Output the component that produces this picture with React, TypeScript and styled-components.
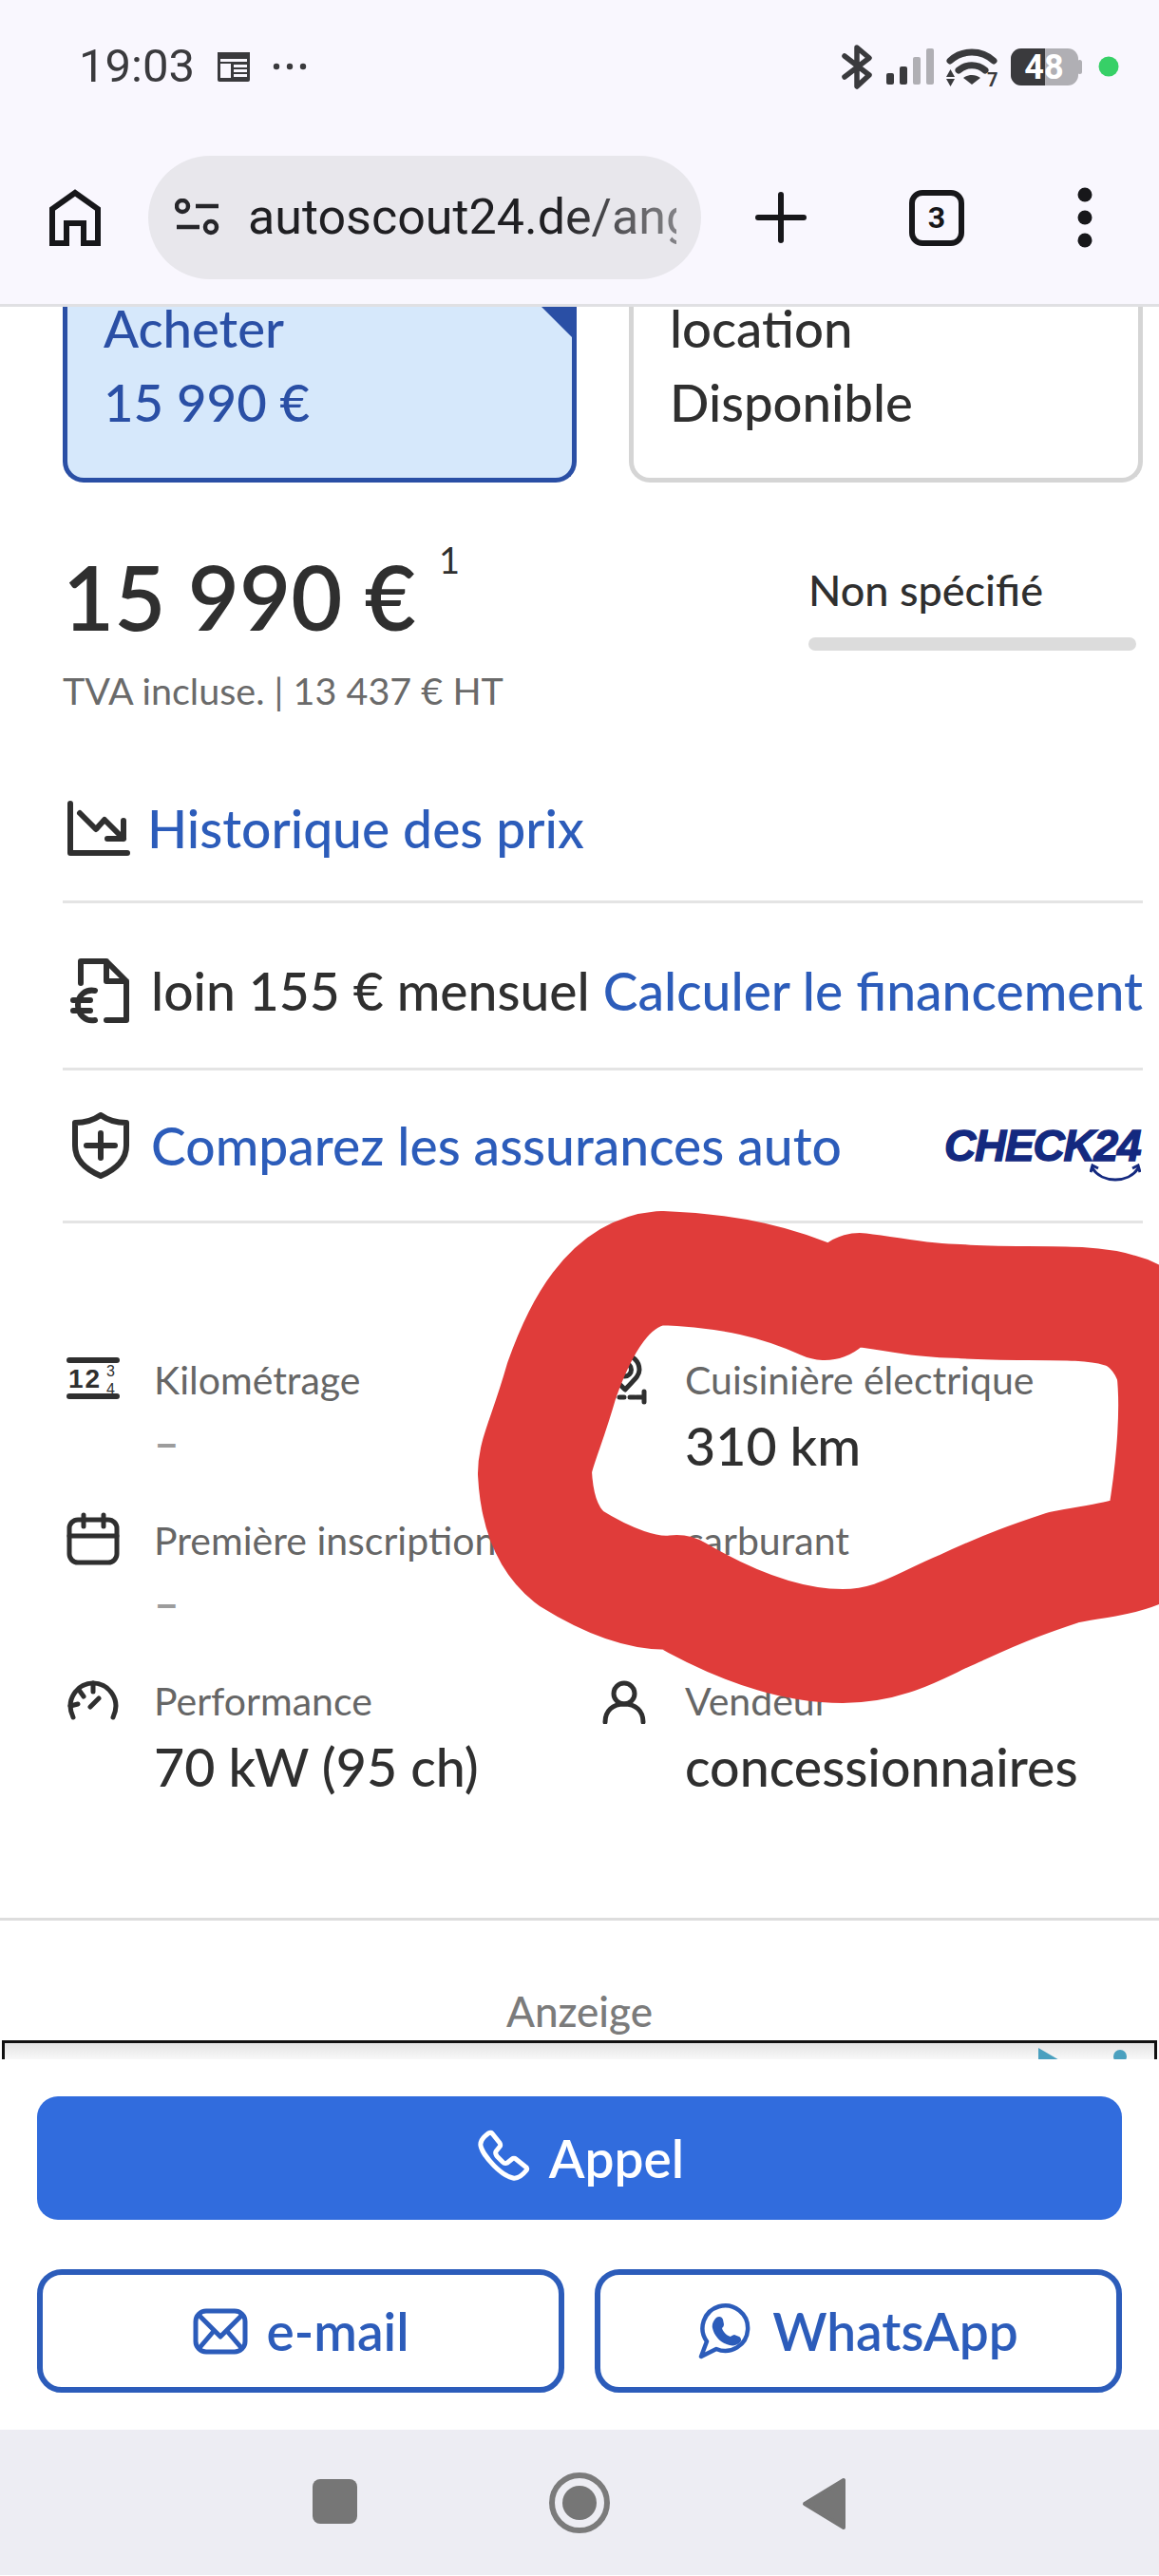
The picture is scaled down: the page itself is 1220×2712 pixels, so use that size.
import React from "react";
import styled, { createGlobalStyle } from "styled-components";

const Global = createGlobalStyle`
  html, body { margin: 0; padding: 0; background: #fff; }
  * { box-sizing: border-box; }
`;

const BODY_FONT = `"Lato", "Noto Sans", sans-serif`;
const UI_FONT = `"Roboto", "Noto Sans", sans-serif`;
const BLUE = "#2c5cba";
const INK = "#2f2f2f";

const Screen = styled.div`
  position: relative;
  width: 1220px;
  height: 2712px;
  overflow: hidden;
  display: flex;
  flex-direction: column;
  font-family: ${BODY_FONT};
  font-weight: 500;
  background: #fff;
`;

const BrowserChrome = styled.header`
  height: 323px;
  flex: none;
  background: #f9f7fe;
  border-bottom: 3px solid #e0e0e3;
  display: flex;
  flex-direction: column;
`;

const StatusBar = styled.div`
  height: 164px;
  padding: 46px 40px 0 83px;
  display: flex;
  align-items: flex-start;
  justify-content: space-between;
`;

const StatusLeft = styled.div`
  display: flex;
  align-items: center;
  height: 48px;
  gap: 23px;
`;

const Clock = styled.span`
  font: 400 49px/48px ${UI_FONT};
  color: #3a3a3d;
`;

const StatusRight = styled.div`
  display: flex;
  align-items: center;
  height: 48px;
`;

const Toolbar = styled.div`
  height: 130px;
  display: flex;
  align-items: center;
  padding-left: 52px;
`;

const HomeSlot = styled.div`
  width: 104px;
  flex: none;
  display: flex;
`;

const UrlPill = styled.div`
  width: 582px;
  height: 130px;
  flex: none;
  border-radius: 65px;
  background: #e8e7ec;
  display: flex;
  align-items: center;
  padding: 0 26px 0 28px;
  gap: 29px;
`;

const UrlText = styled.span`
  flex: 1;
  overflow: hidden;
  white-space: nowrap;
  font: 400 52px/70px ${UI_FONT};
  color: #1f1f22;
  -webkit-mask-image: linear-gradient(to right, #000 72%, rgba(0, 0, 0, 0.5) 100%);
  mask-image: linear-gradient(to right, #000 72%, rgba(0, 0, 0, 0.5) 100%);
`;

const ToolActions = styled.div`
  display: flex;
  align-items: center;
  margin-left: 57px;
`;

const TabCount = styled.div`
  width: 58px;
  height: 59px;
  margin-left: 108px;
  margin-right: 119px;
  border: 6px solid #17171a;
  border-radius: 14px;
  display: flex;
  align-items: center;
  justify-content: center;
  font: 700 32px/1 ${UI_FONT};
  color: #17171a;
`;

const Content = styled.main`
  flex: 1;
  padding-left: 66px;
  padding-right: 17px;
  display: flex;
  flex-direction: column;
`;

const OfferRow = styled.div`
  height: 185px;
  flex: none;
  display: flex;
  gap: 55px;
`;

const OfferCard = styled.div<{ $active?: boolean }>`
  position: relative;
  width: 541px;
  padding: 0 0 0 38px;
  border: 5px solid ${(p) => (p.$active ? "#2a4fa5" : "#d5d5d5")};
  border-top: none;
  border-radius: 0 0 22px 22px;
  background: ${(p) => (p.$active ? "#d6e8fb" : "#fff")};
  color: ${(p) => (p.$active ? "#2a4fa5" : INK)};
  font-size: 54.5px;
  line-height: 78px;
`;

const OfferLine = styled.div`
  height: 78px;
  margin-top: -17px;
  & + & { margin-top: 0; }
`;

const CornerMark = styled.span`
  position: absolute;
  top: 0;
  right: 0;
  border-style: solid;
  border-width: 0 32px 32px 0;
  border-color: transparent #2a4fa5 transparent transparent;
`;

const PriceBlock = styled.section`
  height: 287px;
  flex: none;
  display: flex;
  justify-content: space-between;
  padding-top: 67px;
`;

const PriceColumn = styled.div`
  display: flex;
  flex-direction: column;
`;

const PriceMain = styled.div`
  font-size: 93.5px;
  line-height: 106px;
  font-weight: 600;
  color: ${INK};
  display: flex;
  align-items: flex-start;
`;

const PriceNote = styled.sup`
  font-size: 38px;
  line-height: 38px;
  font-weight: 400;
  margin: -5px 0 0 24px;
`;

const PriceTax = styled.div`
  margin-top: 21px;
  font-size: 39.5px;
  line-height: 50px;
  font-weight: 400;
  color: #6a6a6a;
`;

const RatingColumn = styled.div`
  width: 345px;
  margin: 19px 7px 0 0;
`;

const RatingLabel = styled.div`
  font-size: 45px;
  line-height: 54px;
  color: ${INK};
`;

const RatingBar = styled.div`
  height: 14px;
  margin-top: 23px;
  border-radius: 7px;
  background: #dcdcdc;
`;

const LinkRow = styled.div<{ $height: number; $shift?: number }>`
  height: ${(p) => p.$height}px;
  flex: none;
  display: flex;
  align-items: center;
  justify-content: space-between;
  border-bottom: 3px solid #e4e4e4;
  padding-top: ${(p) => p.$shift ?? 0}px;
`;

const LinkLead = styled.div<{ $indent: number; $gap: number }>`
  display: flex;
  align-items: center;
  margin-left: ${(p) => p.$indent}px;
  gap: ${(p) => p.$gap}px;
`;

const RowIcon = styled.svg<{ $lift?: number }>`
  flex: none;
  fill: none;
  stroke: ${INK};
  stroke-linecap: round;
  stroke-linejoin: round;
  margin-top: ${(p) => p.$lift ?? 0}px;
`;

const RowText = styled.span`
  font-size: 55.2px;
  line-height: 70px;
  color: ${INK};
  white-space: nowrap;
`;

const RowLink = styled.span`
  color: ${BLUE};
`;

const BrandMark = styled.div`
  position: relative;
  width: 209px;
  height: 60px;
  margin-top: 18px;
`;

const BrandWord = styled.span`
  display: block;
  font: italic 700 46px/42px "Liberation Sans", sans-serif;
  letter-spacing: -1.2px;
  color: #14297f;
  -webkit-text-stroke: 1.4px #14297f;
  white-space: nowrap;
`;

const BrandSmile = styled.svg`
  position: absolute;
  right: 2px;
  bottom: 0;
  fill: none;
  stroke: #14297f;
  stroke-width: 3;
`;

const SpecGrid = styled.section`
  flex: none;
  display: grid;
  grid-template-columns: 568px 1fr;
  grid-auto-rows: 169px;
  padding-top: 140px;
  height: 731px;
`;

const SpecItem = styled.div`
  display: flex;
  align-items: flex-start;
`;

const SpecIconSlot = styled.div`
  width: 96px;
  flex: none;
  display: flex;
  padding-left: 4px;
`;

const SpecIconSlotRight = styled.div`
  width: 87px;
  flex: none;
  display: flex;
`;

const SpecLabel = styled.div`
  font-size: 41px;
  line-height: 50px;
  font-weight: 400;
  color: #666;
  white-space: nowrap;
`;

const SpecValue = styled.div<{ $empty?: boolean }>`
  margin-top: ${(p) => (p.$empty ? 12 : 15)}px;
  font-size: ${(p) => (p.$empty ? 46 : 55.5)}px;
  line-height: 58px;
  font-weight: ${(p) => (p.$empty ? 700 : 500)};
  color: ${(p) => (p.$empty ? "#9c9c9c" : INK)};
  white-space: nowrap;
`;

const AdHeading = styled.div`
  flex: none;
  height: 129px;
  margin: 0 -17px 0 -66px;
  padding-top: 70px;
  border-top: 3px solid #ddd;
  text-align: center;
  font-size: 44px;
  line-height: 50px;
  color: #7b7b7b;
`;

const AdFrame = styled.div`
  position: relative;
  height: 20px;
  flex: none;
  margin: 0 -15px 0 -64px;
  border: 3px solid #111;
  border-bottom: none;
  background: linear-gradient(to bottom, #e4e4e4, #f8f8f8);
  overflow: hidden;
`;

const AdBadge = styled.svg`
  position: absolute;
  top: 5px;
  right: 26px;
  fill: #4aa0bf;
`;

const ActionDock = styled.div`
  flex: none;
  height: 390px;
  margin: 0 -17px 0 -66px;
  background: #fff;
  padding: 39px 39px 0;
  display: flex;
  flex-direction: column;
  gap: 52px;
`;

const PrimaryAction = styled.div`
  height: 130px;
  border-radius: 22px;
  background: #316cdd;
  color: #fff;
  display: flex;
  align-items: center;
  justify-content: center;
  gap: 18px;
  font-size: 55px;
  font-weight: 600;
`;

const ActionPair = styled.div`
  display: grid;
  grid-template-columns: 555px 555px;
  gap: 32px;
`;

const SecondaryAction = styled.div`
  height: 130px;
  border: 6px solid ${BLUE};
  border-radius: 26px;
  color: ${BLUE};
  display: flex;
  align-items: center;
  justify-content: center;
  gap: 20px;
  font-size: 55px;
  font-weight: 600;
`;

const SystemNav = styled.nav`
  height: 153px;
  flex: none;
  margin: 0 -17px 0 -66px;
  background: #ededf3;
  display: grid;
  grid-template-columns: 578px 64px 1fr;
  padding-top: 45px;
`;

const NavSquare = styled.div`
  width: 47px;
  height: 47px;
  margin: 7px 0 0 329px;
  border-radius: 8px;
  background: #767676;
`;

const NavRing = styled.div`
  width: 64px;
  height: 64px;
  border: 6px solid #7b7b7b;
  border-radius: 50%;
  display: flex;
  align-items: center;
  justify-content: center;
  &::after {
    content: "";
    width: 36px;
    height: 36px;
    border-radius: 50%;
    background: #767676;
  }
`;

const NavBack = styled.svg`
  margin: 5px 0 0 202px;
  fill: #767676;
  stroke: #767676;
  stroke-width: 4;
  stroke-linejoin: round;
`;

const Scribble = styled.svg`
  position: absolute;
  inset: 0;
  pointer-events: none;
  fill: none;
  stroke: #e03c3a;
  stroke-width: 120;
  stroke-linecap: round;
  stroke-linejoin: round;
`;

const BatteryText = styled.text`
  font: 700 36px ${UI_FONT};
  text-anchor: middle;
`;

const CalendarGlyph = () => (
  <svg width="36" height="32" viewBox="0 0 36 32" fill="#3a3a3d">
    <path d="M1 1h34v29a2 2 0 0 1-2 2H3a2 2 0 0 1-2-2z" />
    <rect x="4" y="8" width="28" height="3" fill="#f9f7fe" />
    <rect x="4" y="13" width="11" height="15" fill="#f9f7fe" />
    <rect x="18" y="14" width="14" height="3" fill="#f9f7fe" />
    <rect x="18" y="19" width="14" height="3" fill="#f9f7fe" />
    <rect x="18" y="24" width="14" height="3" fill="#f9f7fe" />
  </svg>
);

const MoreGlyph = () => (
  <svg width="36" height="8" viewBox="0 0 36 8" fill="#3a3a3d">
    <circle cx="4" cy="4" r="3.2" />
    <circle cx="18" cy="4" r="3.2" />
    <circle cx="32" cy="4" r="3.2" />
  </svg>
);

// Bluetooth, signal, Wi-Fi 7, battery and the privacy dot, as one strip.
const StatusGlyphs = () => (
  <svg width="300" height="52" viewBox="0 0 300 52">
    <path d="M9 15l26 20-13 12V6l13 11L9 37" fill="none" stroke="#3a3a3d" strokeWidth="5.5" strokeLinecap="round" strokeLinejoin="round" />
    <rect x="53" y="33" width="8" height="12" rx="2" fill="#3a3a3d" />
    <rect x="67" y="26" width="8" height="19" rx="2" fill="#3a3a3d" />
    <rect x="81" y="16" width="8" height="29" rx="2" fill="#b0afb4" />
    <rect x="95" y="7" width="8" height="38" rx="2" fill="#b0afb4" />
    <path d="M120 20c13-12 33-12 46 0" fill="none" stroke="#3a3a3d" strokeWidth="7" strokeLinecap="round" />
    <path d="M129 30c8-7 20-7 28 0" fill="none" stroke="#3a3a3d" strokeWidth="7" strokeLinecap="round" />
    <path d="M134 38c5-4 13-4 18 0l-9 7z" fill="#3a3a3d" />
    <path d="M120.500 29l-4.500 8h9zM120.500 47l-4.500-8h9z" fill="#3a3a3d" />
    <text x="159" y="47" fontFamily="Roboto, sans-serif" fontWeight="700" fontSize="20" fill="#3a3a3d">7</text>
    <rect x="184" y="7" width="71" height="39" rx="11" fill="#b0afb4" />
    <path d="M195 7h25v39h-25a11 11 0 0 1-11-11V18a11 11 0 0 1 11-11z" fill="#3a3a3d" />
    <rect x="254" y="19" width="5" height="15" rx="2.500" fill="#b0afb4" />
    <BatteryText x="219" y="39" fill="#fff">48</BatteryText>
    <circle cx="287" cy="26" r="10.500" fill="#37d067" />
  </svg>
);

const Home = () => (
  <svg width="54" height="60" viewBox="0 0 54 60" fill="none" stroke="#17171a" strokeWidth="6">
    <path d="M3 57V21L27 4l24 17v36H36V36H18v21z" strokeLinejoin="miter" />
  </svg>
);

const SiteControls = () => (
  <svg width="48" height="40" viewBox="0 0 48 40" fill="none" stroke="#26262a" strokeWidth="4.500" style={{ flex: "none" }}>
    <circle cx="8" cy="8" r="6" />
    <path d="M22 8h24M2 30h24" />
    <circle cx="38" cy="30" r="6" />
  </svg>
);

const PlusGlyph = () => (
  <svg width="54" height="54" viewBox="0 0 54 54" stroke="#17171a" strokeWidth="6" strokeLinecap="round">
    <path d="M27 3v48M3 27h48" />
  </svg>
);

const MenuGlyph = () => (
  <svg width="16" height="64" viewBox="0 0 16 64" fill="#17171a">
    <circle cx="8" cy="8" r="7.500" />
    <circle cx="8" cy="32" r="7.500" />
    <circle cx="8" cy="56" r="7.500" />
  </svg>
);

const HistoryIcon = () => (
  <RowIcon width="72" height="62" viewBox="0 0 72 62" strokeWidth="6">
    <path d="M6 5v52h60" />
    <path d="M16 15l17 17 9-10 20 20M62 23v19H45" />
  </RowIcon>
);

const FinanceIcon = () => (
  <RowIcon width="70" height="74" viewBox="0 0 70 74" strokeWidth="6">
    <path d="M15 29V6h27l21 21v41H42M42 6v21h21" />
    <path d="M30 37c-10-2-18 5-18 15s8 18 18 16M7 47h18M7 58h18" />
  </RowIcon>
);

const ShieldIcon = () => (
  <RowIcon width="64" height="70" viewBox="0 0 64 70" strokeWidth="6">
    <path d="M32 3c-7 5-16 8-27 8v24c0 16 13 26 27 32 14-6 27-16 27-32V11C48 11 39 8 32 3z" />
    <path d="M32 22v26M17 35h30" />
  </RowIcon>
);

const OdometerIcon = () => (
  <RowIcon width="56" height="46" viewBox="0 0 56 46" strokeWidth="6">
    <path d="M3 4h50M3 42h50" />
    <text x="2" y="33" fontFamily="Liberation Sans, sans-serif" fontWeight="700" fontSize="28" letterSpacing="2" fill="#2f2f2f" stroke="none">12</text>
    <text x="42" y="21" fontFamily="Liberation Sans, sans-serif" fontSize="16" fill="#2f2f2f" stroke="none">3</text>
    <text x="42" y="40" fontFamily="Liberation Sans, sans-serif" fontSize="16" fill="#2f2f2f" stroke="none">4</text>
  </RowIcon>
);

const CalendarIcon = () => (
  <RowIcon width="56" height="56" viewBox="0 0 56 56" strokeWidth="5" $lift={-5}>
    <rect x="3" y="8" width="50" height="45" rx="9" />
    <path d="M3 25h50M18 3v12M39 3v12" />
  </RowIcon>
);

const GaugeIcon = () => (
  <RowIcon width="56" height="42" viewBox="0 0 56 42" strokeWidth="5" $lift={3}>
    <path d="M7 39C-2 20 12 3 28 3s30 17 21 36" />
    <path d="M28 3v9M13 10l5 7M4 27l8-2M25 28l9-9" />
  </RowIcon>
);

const PinIcon = () => (
  <RowIcon width="48" height="54" viewBox="14 16 48 54" strokeWidth="5" $lift={-3}>
    <path d="M38 54C28 44 22 40 22 33a15.500 15.500 0 0 1 31 0c0 7-6 11-15 21z" />
    <circle cx="37.500" cy="33" r="7" />
    <path d="M21 62h30" strokeDasharray="5 6" />
    <path d="M50 62h8M58 56v11" />
  </RowIcon>
);

const PersonIcon = () => (
  <RowIcon width="46" height="46" viewBox="0 0 46 46" strokeWidth="5" $lift={3}>
    <circle cx="23" cy="14" r="11" />
    <path d="M3 44c0-12 8-19 20-19s20 7 20 19" />
  </RowIcon>
);

const HandsetIcon = () => (
  <svg width="60" height="60" viewBox="15 15 60 60" fill="none" stroke="#fff" strokeWidth="5" strokeLinejoin="round">
    <path d="M29 19c2-1 3-1 4 0l8 10c1 2 1 3 0 4l-4 5c-1 2 0 3 1 5l6 6c2 2 3 2 5 1l5-4c1-1 3-1 4 0l10 8c2 1 2 3 1 4-4 5-9 9-14 8-5-1-13-6-20-13s-13-16-14-21c-1-5 4-10 8-13z" />
  </svg>
);

const MailIcon = () => (
  <svg width="58" height="49" viewBox="8 15 58 49" fill="none" stroke={BLUE} strokeWidth="5" strokeLinejoin="round">
    <rect x="11" y="18" width="52" height="43" rx="11" />
    <path d="M14 22l23 23 23-23M14 58l17-20M60 58L43 38" />
  </svg>
);

const WhatsAppIcon = () => (
  <svg width="58" height="62" viewBox="12 8 58 62">
    <path d="M21 50L15 66l16-8A23.800 23.800 0 1 0 21 50z" fill="none" stroke={BLUE} strokeWidth="4.500" strokeLinejoin="round" />
    <path d="M31 25c3-2 6-1 7 2l1 5c0 2-1 3-2 4 1 4 5 8 9 9 1-1 3-2 4-2l5 2c2 1 3 4 1 6-3 3-7 4-11 3-9-2-16-9-18-18-1-4 1-8 4-11z" fill={BLUE} />
  </svg>
);

const specs = [
  { icon: <OdometerIcon />, label: "Kilométrage", value: "–", empty: true },
  { icon: <PinIcon />, label: "Cuisinière électrique", value: "310 km" },
  { icon: <CalendarIcon />, label: "Première inscription", value: "–", empty: true },
  { icon: null, label: "carburant", value: "" },
  { icon: <GaugeIcon />, label: "Performance", value: "70 kW (95 ch)" },
  { icon: <PersonIcon />, label: "Vendeur", value: "concessionnaires" },
];

export default function App() {
  return (
    <Screen>
      <Global />
      <BrowserChrome>
        <StatusBar>
          <StatusLeft>
            <Clock>19:03</Clock>
            <CalendarGlyph />
            <MoreGlyph />
          </StatusLeft>
          <StatusRight>
            <StatusGlyphs />
          </StatusRight>
        </StatusBar>
        <Toolbar>
          <HomeSlot>
            <Home />
          </HomeSlot>
          <UrlPill>
            <SiteControls />
            <UrlText>autoscout24.de/angebote</UrlText>
          </UrlPill>
          <ToolActions>
            <PlusGlyph />
            <TabCount>3</TabCount>
            <MenuGlyph />
          </ToolActions>
        </Toolbar>
      </BrowserChrome>

      <Content>
        <OfferRow>
          <OfferCard $active>
            <CornerMark />
            <OfferLine>Acheter</OfferLine>
            <OfferLine>15 990 €</OfferLine>
          </OfferCard>
          <OfferCard>
            <OfferLine>location</OfferLine>
            <OfferLine>Disponible</OfferLine>
          </OfferCard>
        </OfferRow>

        <PriceBlock>
          <PriceColumn>
            <PriceMain>
              15 990 €<PriceNote>1</PriceNote>
            </PriceMain>
            <PriceTax>TVA incluse. | 13 437 € HT</PriceTax>
          </PriceColumn>
          <RatingColumn>
            <RatingLabel>Non spécifié</RatingLabel>
            <RatingBar />
          </RatingColumn>
        </PriceBlock>

        <LinkRow $height={156}>
          <LinkLead $indent={2} $gap={15}>
            <HistoryIcon />
            <RowText>
              <RowLink>Historique des prix</RowLink>
            </RowText>
          </LinkLead>
        </LinkRow>
        <LinkRow $height={176} $shift={10}>
          <LinkLead $indent={4} $gap={19}>
            <FinanceIcon />
            <RowText>
              loin 155 € mensuel <RowLink>Calculer le financement</RowLink>
            </RowText>
          </LinkLead>
        </LinkRow>
        <LinkRow $height={161}>
          <LinkLead $indent={8} $gap={21}>
            <ShieldIcon />
            <RowText>
              <RowLink>Comparez les assurances auto</RowLink>
            </RowText>
          </LinkLead>
          <BrandMark>
            <BrandWord>CHECK24</BrandWord>
            <BrandSmile width="54" height="20" viewBox="0 0 54 20">
              <path d="M3 5c10 16 38 16 48 0M1 9l2-7 6 3M53 9l-2-7-6 3" />
            </BrandSmile>
          </BrandMark>
        </LinkRow>

        <SpecGrid>
          {specs.map((s, i) => {
            const Slot = i % 2 ? SpecIconSlotRight : SpecIconSlot;
            return (
              <SpecItem key={s.label}>
                <Slot>{s.icon}</Slot>
                <div>
                  <SpecLabel>{s.label}</SpecLabel>
                  {s.value && <SpecValue $empty={s.empty}>{s.value}</SpecValue>}
                </div>
              </SpecItem>
            );
          })}
        </SpecGrid>

        <AdHeading>Anzeige</AdHeading>
        <AdFrame>
          <AdBadge width="96" height="14" viewBox="0 0 96 14">
            <path d="M0 0l24 14H0z" />
            <circle cx="86" cy="9" r="7" />
          </AdBadge>
        </AdFrame>
        <ActionDock>
          <PrimaryAction>
            <HandsetIcon />
            Appel
          </PrimaryAction>
          <ActionPair>
            <SecondaryAction>
              <MailIcon />
              e-mail
            </SecondaryAction>
            <SecondaryAction>
              <WhatsAppIcon />
              WhatsApp
            </SecondaryAction>
          </ActionPair>
        </ActionDock>
        <SystemNav>
          <NavSquare />
          <NavRing />
          <NavBack width="48" height="56" viewBox="0 0 48 56">
            <path d="M44 3v50L3 28z" />
          </NavBack>
        </SystemNav>
      </Content>

      {/* Hand-drawn marker loop over the range figure */}
      <Scribble width="1220" height="2712" viewBox="0 0 1220 2712">
        <path d="M868 1372C820 1350 770 1338 696 1335C640 1340 610 1400 591 1454C575 1510 563 1530 563 1551C565 1590 575 1620 600 1640C640 1665 680 1680 712 1676C770 1710 830 1733 887 1733C940 1733 970 1710 1011 1693C1060 1670 1090 1660 1120 1650C1170 1640 1220 1640 1226 1600C1236 1540 1240 1480 1235 1440C1225 1405 1200 1385 1180 1380C1140 1367 1070 1375 1011 1370C970 1370 940 1362 905 1358" />
      </Scribble>
    </Screen>
  );
}
